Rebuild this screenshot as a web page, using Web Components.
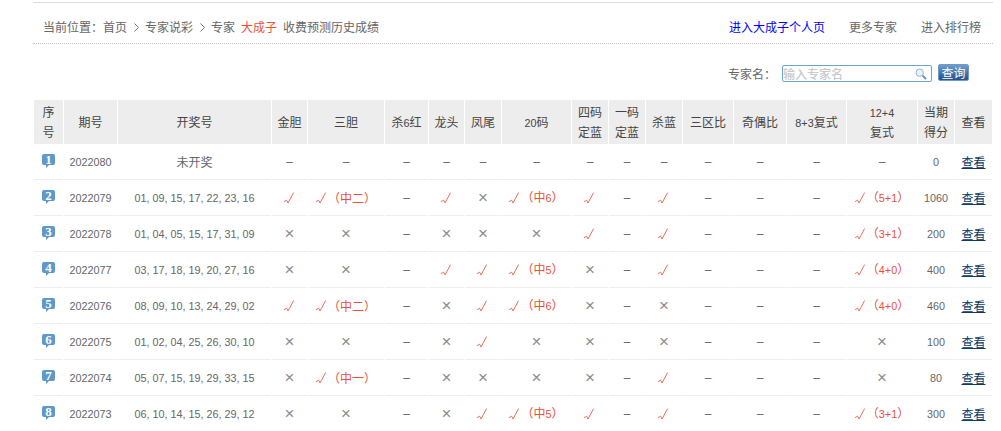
<!DOCTYPE html>
<html lang="zh"><head><meta charset="utf-8"><title>收费预测历史成绩</title>
<style>
html,body{margin:0;padding:0;background:#fff;overflow:hidden;height:431px}
body{font:12px "Noto Sans CJK SC","Liberation Sans",sans-serif;color:#666}
</style></head><body>
<record-page></record-page>
<script>
const CJK='"Noto Sans CJK SC","Liberation Sans",sans-serif';
const digits=s=>s.replace(/[0-9+]+/g,m=>`<span class="n">${m}</span>`);

class CrumbBar extends HTMLElement{constructor(){super();this.attachShadow({mode:'open'}).innerHTML=`<style>
:host{display:flex;justify-content:space-between;align-items:center;height:41px;box-sizing:border-box;padding:8px 12px 0 10px;border-bottom:1px dotted #c4c4c4;font:12px ${CJK};color:#666;line-height:16px}
a{color:inherit;text-decoration:none}
.l{display:flex}.r{display:flex;gap:24px}
.sep{width:5px;margin:0 6px 0 7px;display:flex;align-items:center}
.b{color:#00f}.red{color:#e8503a;margin:0 6px}
svg{display:block}
</style>
<div class="l"><span>当前位置：</span><a>首页</a><span class="sep"><svg width="5" height="9" viewBox="0 0 5 9"><path d="M.5.5 4.5 4.5.5 8.5" fill="none" stroke="#777"/></svg></span><a>专家说彩</a><span class="sep"><svg width="5" height="9" viewBox="0 0 5 9"><path d="M.5.5 4.5 4.5.5 8.5" fill="none" stroke="#777"/></svg></span><a>专家</a><a class="red">大成子</a><span>收费预测历史成绩</span></div>
<div class="r"><a class="b">进入大成子个人页</a><a>更多专家</a><a>进入排行榜</a></div>`}}
customElements.define('crumb-bar',CrumbBar);

class SearchBar extends HTMLElement{constructor(){super();this.attachShadow({mode:'open'}).innerHTML=`<style>
:host{display:flex;justify-content:flex-end;align-items:flex-start;height:56px;box-sizing:border-box;padding:20px 24px 0 0;font:12px ${CJK};color:#666}
.lab{width:54px;line-height:18px;margin-top:1px}
.box{width:150px;height:17px;box-sizing:border-box;margin-top:1px;border:1px solid #6ea5cc;border-radius:2px;display:flex;align-items:center;justify-content:space-between;padding:0 4px 0 0;color:#c9c9c9;line-height:15px;font-weight:500}
.btn{width:31px;height:17px;margin-left:6px;box-sizing:border-box;border:1px solid #6d9cc8;border-radius:2px;background:linear-gradient(#6f9fce,#3f74ae 55%,#27508f);color:#fff;text-align:center;line-height:15px;font-size:12px}
svg{display:block}
</style><span class="lab">专家名：</span><div class="box"><span>输入专家名</span><svg width="12" height="12" viewBox="0 0 12 12"><circle cx="4.7" cy="4.7" r="3.7" fill="#eaf3fa" stroke="#8fb6d3"/><path d="M7.6 7.6 11 11" stroke="#5b97c4" stroke-width="2"/></svg></div><div class="btn">查询</div>`}}
customElements.define('search-bar',SearchBar);

class SeqBadge extends HTMLElement{constructor(){super();this.attachShadow({mode:'open'}).innerHTML=`<style>
:host{display:block;position:relative;width:13px;height:14px;margin:-1px auto 0 auto}
.b{position:absolute;left:0;top:0;width:13px;height:11px;background:#5f98c9;border-radius:2px;color:#fff;font:bold 13px/11px "Liberation Serif",serif;text-align:center}
.t{position:absolute;left:4px;top:11px;width:0;height:0;border-top:3px solid #5f98c9;border-right:3px solid transparent}
</style><div class="b"><slot></slot></div><div class="t"></div>`}}
customElements.define('seq-badge',SeqBadge);

class HitMark extends HTMLElement{constructor(){super();this.attachShadow({mode:'open'}).innerHTML=`<style>
:host{display:inline-block;width:12px;height:12px;flex:none}
svg{display:block}
</style><svg width="12" height="12" viewBox="0 0 12 12"><path d="M0 9.7 2.6 8.2 4 11 9.6 .6" fill="none" stroke="#e8604c" stroke-width=".9"/></svg>`}}
customElements.define('hit-mark',HitMark);

const COLS=[29,53,153,35,76,43,35,36,69,36,36,36,50,52,59,70,36,37];
const HEAD=['序<br>号','期号','开奖号','金胆','三胆','杀6红','龙头','凤尾','20码','四码<br>定蓝','一码<br>定蓝','杀蓝','三区比','奇偶比','8+3复式','12+4<br>复式','当期<br>得分','查看'];
const ROWS=[
['2022080','未开奖','- - - - - - - - - - - - -','0'],
['2022079','01,09,15,17,22,23,16','v v中二 - v x v中6 v - v - - - v5+1','1060'],
['2022078','01,04,05,15,17,31,09','x x - x x x v - v - - - v3+1','200'],
['2022077','03,17,18,19,20,27,16','x x - v v v中5 x - v - - - v4+0','400'],
['2022076','08,09,10,13,24,29,02','v v中二 - x v v中6 x - x - - - v4+0','460'],
['2022075','01,02,04,25,26,30,10','x x - x v x x - x - - - x','100'],
['2022074','05,07,15,19,29,33,15','x v中一 - x x x x - v - - - x','80'],
['2022073','06,10,14,15,26,29,12','x x - x v v中5 v - v - - - v3+1','300']];
const mark=t=>{
  if(t==='-')return '<span class="d">–</span>';
  if(t==='x')return '<span class="x">×</span>';
  const rest=t.slice(1);
  return '<span class="hit"><hit-mark></hit-mark>'+(rest?'<span>（'+digits(rest)+'）</span>':'')+'</span>';
};
class DataTable extends HTMLElement{constructor(){super();
 const tpl=COLS.map(c=>c+'px').join(' ');
 let h=HEAD.map(t=>`<div class="c"><div>${digits(t)}</div></div>`).join('');
 let b=ROWS.map((r,i)=>{
   const cells=r[2].split(' ').map(mark);
   const nums=r[1].includes(',')?`<span class="n">${r[1].replace(/,/g,', ')}</span>`:r[1];
   return `<div class="row"><div class="c"><seq-badge>${i+1}</seq-badge></div><div class="c"><span class="n">${r[0]}</span></div><div class="c">${nums}</div>`+
   cells.map(c=>`<div class="c">${c}</div>`).join('')+
   `<div class="c"><span class="n">${r[3]}</span></div><div class="c"><a>查看</a></div></div>`;
 }).join('');
 this.attachShadow({mode:'open'}).innerHTML=`<style>
:host{display:block;margin-left:1px;font:12px ${CJK};color:#666}
.head,.row{display:grid;grid-template-columns:${tpl};column-gap:1px}
.head{height:44px;color:#444;line-height:20px}
.head .c{background:#ededed;display:flex;align-items:center;justify-content:center;text-align:center}
.row{height:36px}
.row .c{border-bottom:1px solid #eee;display:flex;align-items:center;justify-content:center;white-space:nowrap;line-height:16px}
.n{font:10.8px/16px "Liberation Sans",sans-serif}
a{color:#0b3c63;text-decoration:underline}
.d{font:12px/16px "Liberation Sans",sans-serif;color:#666}
.x{font:17px/16px "Liberation Sans",sans-serif;color:#8c8c8c}
.hit{color:#e8503a;display:inline-flex;align-items:center}
</style><div class="head">${h}</div>${b}`;
}}
customElements.define('data-table',DataTable);

class RecordPage extends HTMLElement{constructor(){super();this.attachShadow({mode:'open'}).innerHTML=`<style>
:host{display:block;width:960px;margin:2px 0 0 33px;border-top:1px solid #ddd}
</style><crumb-bar></crumb-bar><search-bar></search-bar><data-table></data-table>`}}
customElements.define('record-page',RecordPage);
</script>
</body></html>
